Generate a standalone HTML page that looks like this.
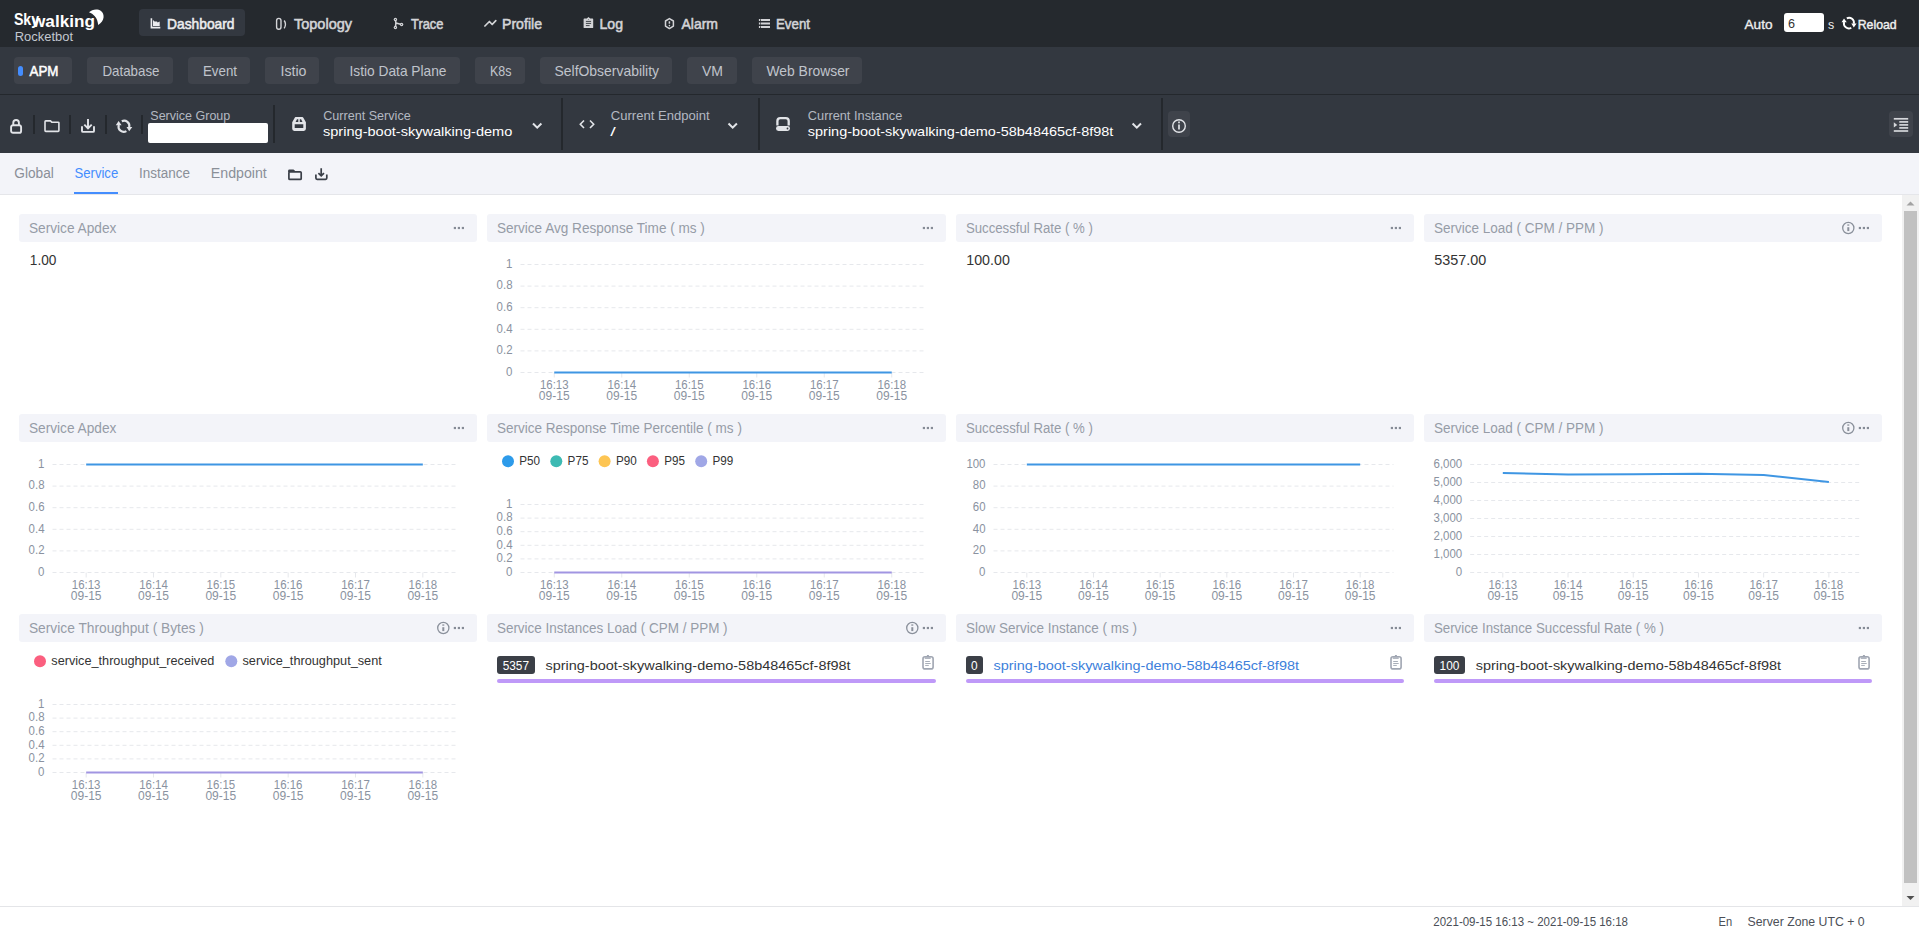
<!DOCTYPE html>
<html><head><meta charset="utf-8"><title>SkyWalking Rocketbot</title>
<style>
html,body{margin:0;padding:0;width:1919px;height:934px;overflow:hidden;background:#fff;font-family:"Liberation Sans",sans-serif;}
#root{position:relative;width:1919px;height:934px;overflow:hidden;}
svg text{font-family:"Liberation Sans",sans-serif;}
</style></head><body><div id="root">
<div style="position:absolute;left:0px;top:0px;width:1919px;height:47px;background:#25292e;border-radius:0px;"></div>
<div style="position:absolute;left:139px;top:9px;width:106px;height:27px;background:#333840;border-radius:4px;"></div>
<div style="position:absolute;left:1784px;top:13px;width:40px;height:19px;background:#ffffff;border-radius:3px;"></div>
<div style="position:absolute;left:0px;top:47px;width:1919px;height:47px;background:#333840;border-radius:0px;"></div>
<div style="position:absolute;left:0px;top:94px;width:1919px;height:1px;background:#24282d;border-radius:0px;"></div>
<div style="position:absolute;left:14px;top:57px;width:58px;height:27px;background:#3f434b;border-radius:4px;"></div>
<div style="position:absolute;left:87px;top:57px;width:86px;height:27px;background:#3f434b;border-radius:4px;"></div>
<div style="position:absolute;left:188px;top:57px;width:62px;height:27px;background:#3f434b;border-radius:4px;"></div>
<div style="position:absolute;left:265px;top:57px;width:54px;height:27px;background:#3f434b;border-radius:4px;"></div>
<div style="position:absolute;left:334px;top:57px;width:126px;height:27px;background:#3f434b;border-radius:4px;"></div>
<div style="position:absolute;left:475px;top:57px;width:50px;height:27px;background:#3f434b;border-radius:4px;"></div>
<div style="position:absolute;left:540px;top:57px;width:132px;height:27px;background:#3f434b;border-radius:4px;"></div>
<div style="position:absolute;left:687px;top:57px;width:50px;height:27px;background:#3f434b;border-radius:4px;"></div>
<div style="position:absolute;left:752px;top:57px;width:110px;height:27px;background:#3f434b;border-radius:4px;"></div>
<div style="position:absolute;left:18px;top:66px;width:5px;height:10px;background:#448dfe;border-radius:2.5px;"></div>
<div style="position:absolute;left:0px;top:95px;width:1919px;height:58px;background:#333840;border-radius:0px;"></div>
<div style="position:absolute;left:33.2px;top:115px;width:1.8px;height:19px;background:#24282d;border-radius:0px;"></div>
<div style="position:absolute;left:69.2px;top:115px;width:1.8px;height:19px;background:#24282d;border-radius:0px;"></div>
<div style="position:absolute;left:105.1px;top:115px;width:1.8px;height:19px;background:#24282d;border-radius:0px;"></div>
<div style="position:absolute;left:141.2px;top:115px;width:1.8px;height:19px;background:#24282d;border-radius:0px;"></div>
<div style="position:absolute;left:148px;top:123px;width:120px;height:20px;background:#ffffff;border-radius:2px;"></div>
<div style="position:absolute;left:273px;top:105px;width:2px;height:38px;background:#24282d;border-radius:0px;"></div>
<div style="position:absolute;left:561px;top:98px;width:2px;height:52px;background:#24282d;border-radius:0px;"></div>
<div style="position:absolute;left:757.5px;top:98px;width:2px;height:52px;background:#24282d;border-radius:0px;"></div>
<div style="position:absolute;left:775.9px;top:126.1px;width:14px;height:4.9px;background:#e2e4e8;border-radius:2.45px;"></div>
<div style="position:absolute;left:1161px;top:98px;width:2px;height:52px;background:#24282d;border-radius:0px;"></div>
<div style="position:absolute;left:1168px;top:111px;width:21.5px;height:25.5px;background:#3f434b;border-radius:4px;"></div>
<div style="position:absolute;left:1889px;top:111px;width:24px;height:26px;background:#3f434b;border-radius:4px;"></div>
<div style="position:absolute;left:0px;top:153px;width:1919px;height:41px;background:#f3f4f9;border-radius:0px;"></div>
<div style="position:absolute;left:0px;top:194px;width:1919px;height:1px;background:#e5e6ea;border-radius:0px;"></div>
<div style="position:absolute;left:74px;top:192px;width:44px;height:2px;background:#448dfe;border-radius:0px;"></div>
<div style="position:absolute;left:0px;top:195px;width:1902px;height:711px;background:#ffffff;border-radius:0px;"></div>
<div style="position:absolute;left:1902px;top:195px;width:17px;height:711px;background:#f1f1f1;border-radius:0px;"></div>
<div style="position:absolute;left:1904px;top:211px;width:13px;height:672px;background:#c1c1c1;border-radius:0px;"></div>
<div style="position:absolute;left:0px;top:906px;width:1919px;height:1px;background:#e4e5e8;border-radius:0px;"></div>
<div style="position:absolute;left:0px;top:907px;width:1919px;height:27px;background:#ffffff;border-radius:0px;"></div>
<div style="position:absolute;left:19px;top:214px;width:458px;height:28px;background:#f3f4f9;border-radius:3px;"></div>
<div style="position:absolute;left:487px;top:214px;width:459px;height:28px;background:#f3f4f9;border-radius:3px;"></div>
<div style="position:absolute;left:956px;top:214px;width:458px;height:28px;background:#f3f4f9;border-radius:3px;"></div>
<div style="position:absolute;left:1424px;top:214px;width:458px;height:28px;background:#f3f4f9;border-radius:3px;"></div>
<div style="position:absolute;left:19px;top:414px;width:458px;height:28px;background:#f3f4f9;border-radius:3px;"></div>
<div style="position:absolute;left:487px;top:414px;width:459px;height:28px;background:#f3f4f9;border-radius:3px;"></div>
<div style="position:absolute;left:956px;top:414px;width:458px;height:28px;background:#f3f4f9;border-radius:3px;"></div>
<div style="position:absolute;left:1424px;top:414px;width:458px;height:28px;background:#f3f4f9;border-radius:3px;"></div>
<div style="position:absolute;left:19px;top:614px;width:458px;height:28px;background:#f3f4f9;border-radius:3px;"></div>
<div style="position:absolute;left:487px;top:614px;width:459px;height:28px;background:#f3f4f9;border-radius:3px;"></div>
<div style="position:absolute;left:497px;top:656px;width:37.7px;height:18px;background:#3b3f47;border-radius:3px;"></div>
<div style="position:absolute;left:497px;top:679px;width:438.5px;height:4px;background:#bf99f8;border-radius:2px;"></div>
<div style="position:absolute;left:956px;top:614px;width:458px;height:28px;background:#f3f4f9;border-radius:3px;"></div>
<div style="position:absolute;left:966px;top:656px;width:16.7px;height:18px;background:#3b3f47;border-radius:3px;"></div>
<div style="position:absolute;left:966px;top:679px;width:437.5px;height:4px;background:#bf99f8;border-radius:2px;"></div>
<div style="position:absolute;left:1424px;top:614px;width:458px;height:28px;background:#f3f4f9;border-radius:3px;"></div>
<div style="position:absolute;left:1434px;top:656px;width:31px;height:18px;background:#3b3f47;border-radius:3px;"></div>
<div style="position:absolute;left:1434px;top:679px;width:437.5px;height:4px;background:#bf99f8;border-radius:2px;"></div>
<svg style="position:absolute;left:0;top:0" width="1919" height="934" viewBox="0 0 1919 934">
<text x="13.9" y="25.1" font-size="16.7" fill="#ffffff" font-weight="bold" textLength="25.3" lengthAdjust="spacingAndGlyphs">Sky</text>
<text x="32" y="26.9" font-size="16.8" fill="#ffffff" font-weight="bold" textLength="63.0" lengthAdjust="spacingAndGlyphs">walking</text>
<text x="14.7" y="41" font-size="12.5" fill="#c3c8d0" textLength="58.3" lengthAdjust="spacingAndGlyphs">Rocketbot</text>
<path d="M89 12.3 C92 9.3 97.5 8.4 101 11 C104.8 14 105 20.8 98.2 25 C97.8 21.5 96.8 18.5 94.8 16.3 C93.2 14.5 91.2 13 89 12.3 Z" stroke="none" fill="#ffffff" stroke-width="1"/>
<text x="167" y="29.3" font-size="14.5" fill="#ececee" textLength="67.5" lengthAdjust="spacingAndGlyphs" stroke="#ececee" stroke-width="0.55">Dashboard</text>
<text x="294" y="29.3" font-size="14.5" fill="#d3d4d7" textLength="58.0" lengthAdjust="spacingAndGlyphs" stroke="#d3d4d7" stroke-width="0.55">Topology</text>
<text x="411" y="29.3" font-size="14.5" fill="#d3d4d7" textLength="32.5" lengthAdjust="spacingAndGlyphs" stroke="#d3d4d7" stroke-width="0.55">Trace</text>
<text x="502" y="29.3" font-size="14.5" fill="#d3d4d7" textLength="40.0" lengthAdjust="spacingAndGlyphs" stroke="#d3d4d7" stroke-width="0.55">Profile</text>
<text x="599.5" y="29.3" font-size="14.5" fill="#d3d4d7" textLength="23.5" lengthAdjust="spacingAndGlyphs" stroke="#d3d4d7" stroke-width="0.55">Log</text>
<text x="681.5" y="29.3" font-size="14.5" fill="#d3d4d7" textLength="36.5" lengthAdjust="spacingAndGlyphs" stroke="#d3d4d7" stroke-width="0.55">Alarm</text>
<text x="776" y="29.3" font-size="14.5" fill="#d3d4d7" textLength="34.0" lengthAdjust="spacingAndGlyphs" stroke="#d3d4d7" stroke-width="0.55">Event</text>
<path d="M151.4 18.3 V27.6 H160.3" stroke="#ececee" fill="none" stroke-width="1.6"/>
<path d="M153 26 V20 L154.6 21.6 H157 L157.6 22.6 L159.7 21.5 V26 Z" stroke="none" fill="#ececee" stroke-width="1"/>
<path d="M278.8 18.4 a2.2 2.2 0 0 1 2.2 2.2 v6.4 a2.2 2.2 0 0 1 -2.2 2.2 a2.2 2.2 0 0 1 -2.2 -2.2 v-6.4 a2.2 2.2 0 0 1 2.2 -2.2 Z M284.2 20.5 q2.6 3.8 0 7.8" stroke="#d3d4d7" fill="none" stroke-width="1.4"/>
<path d="M395.4 19.5 L395.9 23 L395.4 27.5 M395.9 23 L401.6 24.5" stroke="#d3d4d7" fill="none" stroke-width="1.6"/>
<circle cx="395.4" cy="19.5" r="1.7" fill="#d3d4d7"/><circle cx="395.4" cy="19.5" r="0.5" fill="#25292e"/>
<circle cx="395.4" cy="27.5" r="1.7" fill="#d3d4d7"/><circle cx="395.4" cy="27.5" r="0.5" fill="#25292e"/>
<circle cx="401.6" cy="24.5" r="1.7" fill="#d3d4d7"/><circle cx="401.6" cy="24.5" r="0.5" fill="#25292e"/>
<path d="M484.9 26 L489.4 21.5 L492.2 24.5 L495.8 20.6" stroke="#d3d4d7" fill="none" stroke-width="1.7" stroke-linecap="round" stroke-linejoin="round"/>
<path d="M583.6 19.2 a0.7 0.7 0 0 1 0.7 -0.7 h2.5 l1.7 -1.5 l1.7 1.5 h2.3 a0.7 0.7 0 0 1 0.7 0.7 v8.2 a0.7 0.7 0 0 1 -0.7 0.7 h-8.2 a0.7 0.7 0 0 1 -0.7 -0.7 Z" stroke="none" fill="#d3d4d7" stroke-width="1"/>
<path d="M585.9 21.4 h5.2 M585.9 23.4 h5.2 M585.9 25.6 h3.7" stroke="#25292e" fill="none" stroke-width="0.85"/>
<circle cx="588.5" cy="19.4" r="0.45" fill="#25292e"/>
<path d="M669.4 18.6 L673.4 21 V26.2 L669.4 28.6 L665.5 26.2 V21 Z" stroke="#d3d4d7" fill="none" stroke-width="1.5" stroke-linejoin="round"/>
<path d="M669.4 21.3 V23.7" stroke="#d3d4d7" fill="none" stroke-width="1.5"/>
<circle cx="669.4" cy="25.6" r="0.8" fill="#d3d4d7"/>
<path d="M758.9 20 h1.3 M760.8 20 H770" stroke="#d3d4d7" fill="none" stroke-width="1.9"/>
<path d="M758.9 23.55 h1.3 M760.8 23.55 H770" stroke="#d3d4d7" fill="none" stroke-width="1.9"/>
<path d="M758.9 26.95 h1.3 M760.8 26.95 H770" stroke="#d3d4d7" fill="none" stroke-width="1.9"/>
<text x="1744.5" y="28.5" font-size="13.5" fill="#efefef" textLength="28.0" lengthAdjust="spacingAndGlyphs" stroke="#efefef" stroke-width="0.35">Auto</text>
<text x="1788" y="28" font-size="13.5" fill="#333" textLength="7.0" lengthAdjust="spacingAndGlyphs">6</text>
<text x="1828" y="28.5" font-size="13" fill="#efefef" textLength="6.2" lengthAdjust="spacingAndGlyphs">s</text>
<path d="M1846.8 18.3 A4.9 4.9 0 0 1 1853.8 23.8 M1851.3 27.7 A4.9 4.9 0 0 1 1844.1 22.1" stroke="#ffffff" fill="none" stroke-width="1.9"/>
<path d="M1851.3 23.6 L1856.6 23.6 L1853.8 27.5 Z M1841.5 22.3 L1846.8 22.3 L1844 18.4 Z" stroke="none" fill="#ffffff" stroke-width="1"/>
<text x="1857.7" y="28.5" font-size="13.5" fill="#efefef" textLength="39.0" lengthAdjust="spacingAndGlyphs" stroke="#efefef" stroke-width="0.45">Reload</text>
<text x="29.5" y="76.2" font-size="14.5" fill="#ffffff" textLength="29.0" lengthAdjust="spacingAndGlyphs" stroke="#ffffff" stroke-width="0.5">APM</text>
<text x="102.5" y="76.2" font-size="14.5" fill="#c0c4cb" textLength="57.0" lengthAdjust="spacingAndGlyphs">Database</text>
<text x="203" y="76.2" font-size="14.5" fill="#c0c4cb" textLength="34.0" lengthAdjust="spacingAndGlyphs">Event</text>
<text x="280.5" y="76.2" font-size="14.5" fill="#c0c4cb" textLength="26.0" lengthAdjust="spacingAndGlyphs">Istio</text>
<text x="349.5" y="76.2" font-size="14.5" fill="#c0c4cb" textLength="97.0" lengthAdjust="spacingAndGlyphs">Istio Data Plane</text>
<text x="490" y="76.2" font-size="14.5" fill="#c0c4cb" textLength="21.5" lengthAdjust="spacingAndGlyphs">K8s</text>
<text x="554.5" y="76.2" font-size="14.5" fill="#c0c4cb" textLength="104.5" lengthAdjust="spacingAndGlyphs">SelfObservability</text>
<text x="702" y="76.2" font-size="14.5" fill="#c0c4cb" textLength="21.0" lengthAdjust="spacingAndGlyphs">VM</text>
<text x="766.5" y="76.2" font-size="14.5" fill="#c0c4cb" textLength="83.0" lengthAdjust="spacingAndGlyphs">Web Browser</text>
<path d="M13.3 125.5 v-2.7 a2.8 2.8 0 0 1 5.6 0 v2.7" stroke="#e2e4e8" fill="none" stroke-width="1.9"/>
<path d="M13 125.2 h6.2 a1.9 1.9 0 0 1 1.9 1.9 v3.8 a1.9 1.9 0 0 1 -1.9 1.9 h-6.2 a1.9 1.9 0 0 1 -1.9 -1.9 v-3.8 a1.9 1.9 0 0 1 1.9 -1.9 Z" stroke="#e2e4e8" fill="none" stroke-width="1.9"/>
<path d="M45.8 120.9 h4.6 l1.4 1.3 h6.3 a0.8 0.8 0 0 1 0.8 0.8 v7.6 a0.8 0.8 0 0 1 -0.8 0.8 h-12.3 a0.8 0.8 0 0 1 -0.8 -0.8 v-8.9 a0.8 0.8 0 0 1 0.8 -0.8 Z" stroke="#e2e4e8" fill="none" stroke-width="1.6"/>
<path d="M88 119 v9 M84.3 124.6 L88 128.3 L91.7 124.6 M82 126.3 v4.6 a1 1 0 0 0 1 1 h10 a1 1 0 0 0 1 -1 v-4.6" stroke="#e2e4e8" fill="none" stroke-width="1.9"/>
<path d="M121.8 121.3 A5.2 5.2 0 0 1 129.2 127.2 M126.4 131.1 A5.2 5.2 0 0 1 118.8 125" stroke="#e2e4e8" fill="none" stroke-width="2.1"/>
<path d="M126.5 127 L132.3 127 L129.2 131.2 Z M115.8 125.2 L121.6 125.2 L118.6 121 Z" stroke="none" fill="#e2e4e8" stroke-width="1"/>
<text x="150.3" y="119.5" font-size="12.5" fill="#b3b9c2" textLength="80.0" lengthAdjust="spacingAndGlyphs">Service Group</text>
<path d="M295.6 117.1 H302.3 Q303 117.1 303.5 117.9 L305.9 122.2 V128.8 Q305.9 130.9 303.8 130.9 H294.3 Q292.2 130.9 292.2 128.8 V122.2 L294.6 117.9 Q295 117.1 295.6 117.1 Z M294.7 124.3 H303.3 V127.9 H294.7 Z M295.6 122 L297 119.2 H298.3 V122 Z M299.8 122 V119.2 H301.1 L302.5 122 Z" stroke="none" fill="#e2e4e8" stroke-width="1" fill-rule="evenodd"/>
<text x="323.2" y="120.2" font-size="12.5" fill="#b3b9c2" textLength="87.5" lengthAdjust="spacingAndGlyphs">Current Service</text>
<text x="323" y="136" font-size="13.5" fill="#ffffff" textLength="189.3" lengthAdjust="spacingAndGlyphs">spring-boot-skywalking-demo</text>
<path d="M533 123.5 L537.2 127.7 L541.4 123.5" stroke="#e2e4e8" fill="none" stroke-width="2"/>
<path d="M584 120.5 L580.3 124.2 L584 128 M590 120.5 L593.7 124.2 L590 128" stroke="#e2e4e8" fill="none" stroke-width="1.6"/>
<text x="610.8" y="120.2" font-size="12.5" fill="#b3b9c2" textLength="98.8" lengthAdjust="spacingAndGlyphs">Current Endpoint</text>
<text x="610.3" y="136" font-size="13.5" fill="#ffffff" textLength="5.5" lengthAdjust="spacingAndGlyphs">/</text>
<path d="M728.5 123.5 L732.7 127.7 L736.9 123.5" stroke="#e2e4e8" fill="none" stroke-width="2"/>
<path d="M777.4 125.6 V121 a2.9 2.9 0 0 1 2.9 -2.9 h5.5 a2.9 2.9 0 0 1 2.9 2.9 V125.6" stroke="#e2e4e8" fill="none" stroke-width="2.3"/>
<circle cx="787.5" cy="128.5" r="0.9" fill="#333840"/>
<text x="807.8" y="120.2" font-size="12.5" fill="#b3b9c2" textLength="94.5" lengthAdjust="spacingAndGlyphs">Current Instance</text>
<text x="807.8" y="136" font-size="13.5" fill="#ffffff" textLength="305.5" lengthAdjust="spacingAndGlyphs">spring-boot-skywalking-demo-58b48465cf-8f98t</text>
<path d="M1132.6 123.5 L1136.8 127.7 L1141 123.5" stroke="#e2e4e8" fill="none" stroke-width="2"/>
<circle cx="1179" cy="126" r="6.3" fill="none" stroke="#e2e4e8" stroke-width="1.4"/>
<path d="M1179 124.5 v5" stroke="#e2e4e8" fill="none" stroke-width="1.7"/>
<path d="M1179 121.6 v1.6" stroke="#e2e4e8" fill="none" stroke-width="1.7"/>
<path d="M1893.8 118.8 H1908.2" stroke="#d5d7db" fill="none" stroke-width="1.7"/>
<path d="M1899.3 121.9 H1908.2" stroke="#d5d7db" fill="none" stroke-width="1.7"/>
<path d="M1899.3 124.9 H1908.2" stroke="#d5d7db" fill="none" stroke-width="1.7"/>
<path d="M1899.3 127.9 H1908.2" stroke="#d5d7db" fill="none" stroke-width="1.7"/>
<path d="M1893.8 131 H1908.2" stroke="#d5d7db" fill="none" stroke-width="1.7"/>
<path d="M1893.8 122.2 L1897.3 124.9 L1893.8 127.6 Z" stroke="none" fill="#d5d7db" stroke-width="1"/>
<text x="14.3" y="178.3" font-size="14" fill="#8a8f98" textLength="39.5" lengthAdjust="spacingAndGlyphs">Global</text>
<text x="74.5" y="178.3" font-size="14" fill="#448dfe" textLength="43.7" lengthAdjust="spacingAndGlyphs">Service</text>
<text x="139" y="178.3" font-size="14" fill="#8a8f98" textLength="51.0" lengthAdjust="spacingAndGlyphs">Instance</text>
<text x="210.8" y="178.3" font-size="14" fill="#8a8f98" textLength="56.0" lengthAdjust="spacingAndGlyphs">Endpoint</text>
<path d="M290.2 171.8 h10 a1 1 0 0 1 1 1 v5.6 a1 1 0 0 1 -1 1 h-10.3 a1 1 0 0 1 -1 -1 v-5.6 a1 1 0 0 1 1 -1 Z" stroke="#3a3f48" fill="none" stroke-width="1.7"/>
<path d="M288.1 172 v-1.2 a1.3 1.3 0 0 1 1.3 -1.3 h4.1 l1.5 1.3 v1.2 Z" stroke="none" fill="#3a3f48" stroke-width="1"/>
<path d="M315.9 174.4 v3.7 a1.2 1.2 0 0 0 1.2 1.2 h8.5 a1.2 1.2 0 0 0 1.2 -1.2 v-3.7 M321.2 168.2 v7.6 M318.4 173.1 L321.2 175.9 L324 173.1" stroke="#3a3f48" fill="none" stroke-width="1.7"/>
<path d="M1906.5 205.5 L1910.5 201.5 L1914.5 205.5 Z" stroke="none" fill="#a3a3a3" stroke-width="1"/>
<path d="M1906.5 896 L1910.5 900 L1914.5 896 Z" stroke="none" fill="#505050" stroke-width="1"/>
<text x="1433.3" y="926.3" font-size="12" fill="#4b4f57" textLength="194.7" lengthAdjust="spacingAndGlyphs">2021-09-15 16:13 ~ 2021-09-15 16:18</text>
<text x="1718.6" y="926.3" font-size="12" fill="#4b4f57" textLength="13.6" lengthAdjust="spacingAndGlyphs">En</text>
<text x="1747.6" y="926.3" font-size="12" fill="#4b4f57" textLength="117.0" lengthAdjust="spacingAndGlyphs">Server Zone UTC + 0</text>
<text x="28.9" y="233" font-size="14" fill="#969ca7" textLength="87.5" lengthAdjust="spacingAndGlyphs">Service Apdex</text>
<rect x="453.8" y="226.9" width="2.2" height="2.2" fill="#858b96"/>
<rect x="457.8" y="226.9" width="2.2" height="2.2" fill="#858b96"/>
<rect x="461.8" y="226.9" width="2.2" height="2.2" fill="#858b96"/>
<text x="29.8" y="264.8" font-size="14.5" fill="#333333" textLength="26.6" lengthAdjust="spacingAndGlyphs">1.00</text>
<text x="496.9" y="233" font-size="14" fill="#969ca7" textLength="208.0" lengthAdjust="spacingAndGlyphs">Service Avg Response Time ( ms )</text>
<rect x="922.8" y="226.9" width="2.2" height="2.2" fill="#858b96"/>
<rect x="926.8" y="226.9" width="2.2" height="2.2" fill="#858b96"/>
<rect x="930.8" y="226.9" width="2.2" height="2.2" fill="#858b96"/>
<line x1="520.5" y1="264.50" x2="925.5" y2="264.50" stroke="#e6e8ec" stroke-width="1" stroke-dasharray="4 3"/>
<text x="512.5" y="267.8" font-size="12" fill="#8a92a0" text-anchor="end" textLength="6.4" lengthAdjust="spacingAndGlyphs">1</text>
<line x1="520.5" y1="286.10" x2="925.5" y2="286.10" stroke="#e6e8ec" stroke-width="1" stroke-dasharray="4 3"/>
<text x="512.5" y="289.40000000000003" font-size="12" fill="#8a92a0" text-anchor="end" textLength="15.9" lengthAdjust="spacingAndGlyphs">0.8</text>
<line x1="520.5" y1="307.70" x2="925.5" y2="307.70" stroke="#e6e8ec" stroke-width="1" stroke-dasharray="4 3"/>
<text x="512.5" y="311.0" font-size="12" fill="#8a92a0" text-anchor="end" textLength="15.9" lengthAdjust="spacingAndGlyphs">0.6</text>
<line x1="520.5" y1="329.30" x2="925.5" y2="329.30" stroke="#e6e8ec" stroke-width="1" stroke-dasharray="4 3"/>
<text x="512.5" y="332.6" font-size="12" fill="#8a92a0" text-anchor="end" textLength="15.9" lengthAdjust="spacingAndGlyphs">0.4</text>
<line x1="520.5" y1="350.90" x2="925.5" y2="350.90" stroke="#e6e8ec" stroke-width="1" stroke-dasharray="4 3"/>
<text x="512.5" y="354.2" font-size="12" fill="#8a92a0" text-anchor="end" textLength="15.9" lengthAdjust="spacingAndGlyphs">0.2</text>
<line x1="520.5" y1="372.50" x2="925.5" y2="372.50" stroke="#e6e8ec" stroke-width="1" stroke-dasharray="4 3"/>
<text x="512.5" y="375.8" font-size="12" fill="#8a92a0" text-anchor="end" textLength="6.4" lengthAdjust="spacingAndGlyphs">0</text>
<line x1="554.25" y1="372.5" x2="554.25" y2="377.5" stroke="#e6e8ec" stroke-width="1"/>
<text x="554.25" y="388.7" font-size="12" fill="#8a92a0" text-anchor="middle" textLength="28.6" lengthAdjust="spacingAndGlyphs">16:13</text>
<text x="554.25" y="400.0" font-size="12" fill="#8a92a0" text-anchor="middle" textLength="30.8" lengthAdjust="spacingAndGlyphs">09-15</text>
<line x1="621.75" y1="372.5" x2="621.75" y2="377.5" stroke="#e6e8ec" stroke-width="1"/>
<text x="621.75" y="388.7" font-size="12" fill="#8a92a0" text-anchor="middle" textLength="28.6" lengthAdjust="spacingAndGlyphs">16:14</text>
<text x="621.75" y="400.0" font-size="12" fill="#8a92a0" text-anchor="middle" textLength="30.8" lengthAdjust="spacingAndGlyphs">09-15</text>
<line x1="689.25" y1="372.5" x2="689.25" y2="377.5" stroke="#e6e8ec" stroke-width="1"/>
<text x="689.25" y="388.7" font-size="12" fill="#8a92a0" text-anchor="middle" textLength="28.6" lengthAdjust="spacingAndGlyphs">16:15</text>
<text x="689.25" y="400.0" font-size="12" fill="#8a92a0" text-anchor="middle" textLength="30.8" lengthAdjust="spacingAndGlyphs">09-15</text>
<line x1="756.75" y1="372.5" x2="756.75" y2="377.5" stroke="#e6e8ec" stroke-width="1"/>
<text x="756.75" y="388.7" font-size="12" fill="#8a92a0" text-anchor="middle" textLength="28.6" lengthAdjust="spacingAndGlyphs">16:16</text>
<text x="756.75" y="400.0" font-size="12" fill="#8a92a0" text-anchor="middle" textLength="30.8" lengthAdjust="spacingAndGlyphs">09-15</text>
<line x1="824.25" y1="372.5" x2="824.25" y2="377.5" stroke="#e6e8ec" stroke-width="1"/>
<text x="824.25" y="388.7" font-size="12" fill="#8a92a0" text-anchor="middle" textLength="28.6" lengthAdjust="spacingAndGlyphs">16:17</text>
<text x="824.25" y="400.0" font-size="12" fill="#8a92a0" text-anchor="middle" textLength="30.8" lengthAdjust="spacingAndGlyphs">09-15</text>
<line x1="891.75" y1="372.5" x2="891.75" y2="377.5" stroke="#e6e8ec" stroke-width="1"/>
<text x="891.75" y="388.7" font-size="12" fill="#8a92a0" text-anchor="middle" textLength="28.6" lengthAdjust="spacingAndGlyphs">16:18</text>
<text x="891.75" y="400.0" font-size="12" fill="#8a92a0" text-anchor="middle" textLength="30.8" lengthAdjust="spacingAndGlyphs">09-15</text>
<polyline points="554.25,372.5 621.75,372.5 689.25,372.5 756.75,372.5 824.25,372.5 891.75,372.5" fill="none" stroke="#3f96e3" stroke-width="2" stroke-linejoin="round"/>
<text x="965.9" y="233" font-size="14" fill="#969ca7" textLength="127.0" lengthAdjust="spacingAndGlyphs">Successful Rate ( % )</text>
<rect x="1390.8" y="226.9" width="2.2" height="2.2" fill="#858b96"/>
<rect x="1394.8" y="226.9" width="2.2" height="2.2" fill="#858b96"/>
<rect x="1398.8" y="226.9" width="2.2" height="2.2" fill="#858b96"/>
<text x="966.3" y="264.8" font-size="14.5" fill="#333333" textLength="43.5" lengthAdjust="spacingAndGlyphs">100.00</text>
<text x="1433.9" y="233" font-size="14" fill="#969ca7" textLength="169.5" lengthAdjust="spacingAndGlyphs">Service Load ( CPM / PPM )</text>
<rect x="1858.8" y="226.9" width="2.2" height="2.2" fill="#858b96"/>
<rect x="1862.8" y="226.9" width="2.2" height="2.2" fill="#858b96"/>
<rect x="1866.8" y="226.9" width="2.2" height="2.2" fill="#858b96"/>
<circle cx="1848.3" cy="228" r="5.6" fill="none" stroke="#8a909b" stroke-width="1.3"/>
<rect x="1847.3" y="227.2" width="2" height="3.9" fill="#8a909b"/>
<rect x="1847.3" y="224.4" width="2" height="1.3" fill="#8a909b"/>
<text x="1434.3" y="264.8" font-size="14.5" fill="#333333" textLength="52.0" lengthAdjust="spacingAndGlyphs">5357.00</text>
<text x="28.9" y="433" font-size="14" fill="#969ca7" textLength="87.5" lengthAdjust="spacingAndGlyphs">Service Apdex</text>
<rect x="453.8" y="426.9" width="2.2" height="2.2" fill="#858b96"/>
<rect x="457.8" y="426.9" width="2.2" height="2.2" fill="#858b96"/>
<rect x="461.8" y="426.9" width="2.2" height="2.2" fill="#858b96"/>
<line x1="52.5" y1="464.50" x2="456.5" y2="464.50" stroke="#e6e8ec" stroke-width="1" stroke-dasharray="4 3"/>
<text x="44.5" y="467.8" font-size="12" fill="#8a92a0" text-anchor="end" textLength="6.4" lengthAdjust="spacingAndGlyphs">1</text>
<line x1="52.5" y1="486.10" x2="456.5" y2="486.10" stroke="#e6e8ec" stroke-width="1" stroke-dasharray="4 3"/>
<text x="44.5" y="489.40000000000003" font-size="12" fill="#8a92a0" text-anchor="end" textLength="15.9" lengthAdjust="spacingAndGlyphs">0.8</text>
<line x1="52.5" y1="507.70" x2="456.5" y2="507.70" stroke="#e6e8ec" stroke-width="1" stroke-dasharray="4 3"/>
<text x="44.5" y="511.0" font-size="12" fill="#8a92a0" text-anchor="end" textLength="15.9" lengthAdjust="spacingAndGlyphs">0.6</text>
<line x1="52.5" y1="529.30" x2="456.5" y2="529.30" stroke="#e6e8ec" stroke-width="1" stroke-dasharray="4 3"/>
<text x="44.5" y="532.5999999999999" font-size="12" fill="#8a92a0" text-anchor="end" textLength="15.9" lengthAdjust="spacingAndGlyphs">0.4</text>
<line x1="52.5" y1="550.90" x2="456.5" y2="550.90" stroke="#e6e8ec" stroke-width="1" stroke-dasharray="4 3"/>
<text x="44.5" y="554.1999999999999" font-size="12" fill="#8a92a0" text-anchor="end" textLength="15.9" lengthAdjust="spacingAndGlyphs">0.2</text>
<line x1="52.5" y1="572.50" x2="456.5" y2="572.50" stroke="#e6e8ec" stroke-width="1" stroke-dasharray="4 3"/>
<text x="44.5" y="575.8" font-size="12" fill="#8a92a0" text-anchor="end" textLength="6.4" lengthAdjust="spacingAndGlyphs">0</text>
<line x1="86.17" y1="572.5" x2="86.17" y2="577.5" stroke="#e6e8ec" stroke-width="1"/>
<text x="86.16666666666666" y="588.7" font-size="12" fill="#8a92a0" text-anchor="middle" textLength="28.6" lengthAdjust="spacingAndGlyphs">16:13</text>
<text x="86.16666666666666" y="600.0" font-size="12" fill="#8a92a0" text-anchor="middle" textLength="30.8" lengthAdjust="spacingAndGlyphs">09-15</text>
<line x1="153.50" y1="572.5" x2="153.50" y2="577.5" stroke="#e6e8ec" stroke-width="1"/>
<text x="153.5" y="588.7" font-size="12" fill="#8a92a0" text-anchor="middle" textLength="28.6" lengthAdjust="spacingAndGlyphs">16:14</text>
<text x="153.5" y="600.0" font-size="12" fill="#8a92a0" text-anchor="middle" textLength="30.8" lengthAdjust="spacingAndGlyphs">09-15</text>
<line x1="220.83" y1="572.5" x2="220.83" y2="577.5" stroke="#e6e8ec" stroke-width="1"/>
<text x="220.83333333333331" y="588.7" font-size="12" fill="#8a92a0" text-anchor="middle" textLength="28.6" lengthAdjust="spacingAndGlyphs">16:15</text>
<text x="220.83333333333331" y="600.0" font-size="12" fill="#8a92a0" text-anchor="middle" textLength="30.8" lengthAdjust="spacingAndGlyphs">09-15</text>
<line x1="288.17" y1="572.5" x2="288.17" y2="577.5" stroke="#e6e8ec" stroke-width="1"/>
<text x="288.16666666666663" y="588.7" font-size="12" fill="#8a92a0" text-anchor="middle" textLength="28.6" lengthAdjust="spacingAndGlyphs">16:16</text>
<text x="288.16666666666663" y="600.0" font-size="12" fill="#8a92a0" text-anchor="middle" textLength="30.8" lengthAdjust="spacingAndGlyphs">09-15</text>
<line x1="355.50" y1="572.5" x2="355.50" y2="577.5" stroke="#e6e8ec" stroke-width="1"/>
<text x="355.5" y="588.7" font-size="12" fill="#8a92a0" text-anchor="middle" textLength="28.6" lengthAdjust="spacingAndGlyphs">16:17</text>
<text x="355.5" y="600.0" font-size="12" fill="#8a92a0" text-anchor="middle" textLength="30.8" lengthAdjust="spacingAndGlyphs">09-15</text>
<line x1="422.83" y1="572.5" x2="422.83" y2="577.5" stroke="#e6e8ec" stroke-width="1"/>
<text x="422.8333333333333" y="588.7" font-size="12" fill="#8a92a0" text-anchor="middle" textLength="28.6" lengthAdjust="spacingAndGlyphs">16:18</text>
<text x="422.8333333333333" y="600.0" font-size="12" fill="#8a92a0" text-anchor="middle" textLength="30.8" lengthAdjust="spacingAndGlyphs">09-15</text>
<polyline points="86.17,464.5 153.50,464.5 220.83,464.5 288.17,464.5 355.50,464.5 422.83,464.5" fill="none" stroke="#3f96e3" stroke-width="2" stroke-linejoin="round"/>
<text x="496.9" y="433" font-size="14" fill="#969ca7" textLength="245.0" lengthAdjust="spacingAndGlyphs">Service Response Time Percentile ( ms )</text>
<rect x="922.8" y="426.9" width="2.2" height="2.2" fill="#858b96"/>
<rect x="926.8" y="426.9" width="2.2" height="2.2" fill="#858b96"/>
<rect x="930.8" y="426.9" width="2.2" height="2.2" fill="#858b96"/>
<line x1="520.5" y1="504.50" x2="925.5" y2="504.50" stroke="#e6e8ec" stroke-width="1" stroke-dasharray="4 3"/>
<text x="512.5" y="507.8" font-size="12" fill="#8a92a0" text-anchor="end" textLength="6.4" lengthAdjust="spacingAndGlyphs">1</text>
<line x1="520.5" y1="518.10" x2="925.5" y2="518.10" stroke="#e6e8ec" stroke-width="1" stroke-dasharray="4 3"/>
<text x="512.5" y="521.4" font-size="12" fill="#8a92a0" text-anchor="end" textLength="15.9" lengthAdjust="spacingAndGlyphs">0.8</text>
<line x1="520.5" y1="531.70" x2="925.5" y2="531.70" stroke="#e6e8ec" stroke-width="1" stroke-dasharray="4 3"/>
<text x="512.5" y="535.0" font-size="12" fill="#8a92a0" text-anchor="end" textLength="15.9" lengthAdjust="spacingAndGlyphs">0.6</text>
<line x1="520.5" y1="545.30" x2="925.5" y2="545.30" stroke="#e6e8ec" stroke-width="1" stroke-dasharray="4 3"/>
<text x="512.5" y="548.5999999999999" font-size="12" fill="#8a92a0" text-anchor="end" textLength="15.9" lengthAdjust="spacingAndGlyphs">0.4</text>
<line x1="520.5" y1="558.90" x2="925.5" y2="558.90" stroke="#e6e8ec" stroke-width="1" stroke-dasharray="4 3"/>
<text x="512.5" y="562.1999999999999" font-size="12" fill="#8a92a0" text-anchor="end" textLength="15.9" lengthAdjust="spacingAndGlyphs">0.2</text>
<line x1="520.5" y1="572.50" x2="925.5" y2="572.50" stroke="#e6e8ec" stroke-width="1" stroke-dasharray="4 3"/>
<text x="512.5" y="575.8" font-size="12" fill="#8a92a0" text-anchor="end" textLength="6.4" lengthAdjust="spacingAndGlyphs">0</text>
<line x1="554.25" y1="572.5" x2="554.25" y2="577.5" stroke="#e6e8ec" stroke-width="1"/>
<text x="554.25" y="588.7" font-size="12" fill="#8a92a0" text-anchor="middle" textLength="28.6" lengthAdjust="spacingAndGlyphs">16:13</text>
<text x="554.25" y="600.0" font-size="12" fill="#8a92a0" text-anchor="middle" textLength="30.8" lengthAdjust="spacingAndGlyphs">09-15</text>
<line x1="621.75" y1="572.5" x2="621.75" y2="577.5" stroke="#e6e8ec" stroke-width="1"/>
<text x="621.75" y="588.7" font-size="12" fill="#8a92a0" text-anchor="middle" textLength="28.6" lengthAdjust="spacingAndGlyphs">16:14</text>
<text x="621.75" y="600.0" font-size="12" fill="#8a92a0" text-anchor="middle" textLength="30.8" lengthAdjust="spacingAndGlyphs">09-15</text>
<line x1="689.25" y1="572.5" x2="689.25" y2="577.5" stroke="#e6e8ec" stroke-width="1"/>
<text x="689.25" y="588.7" font-size="12" fill="#8a92a0" text-anchor="middle" textLength="28.6" lengthAdjust="spacingAndGlyphs">16:15</text>
<text x="689.25" y="600.0" font-size="12" fill="#8a92a0" text-anchor="middle" textLength="30.8" lengthAdjust="spacingAndGlyphs">09-15</text>
<line x1="756.75" y1="572.5" x2="756.75" y2="577.5" stroke="#e6e8ec" stroke-width="1"/>
<text x="756.75" y="588.7" font-size="12" fill="#8a92a0" text-anchor="middle" textLength="28.6" lengthAdjust="spacingAndGlyphs">16:16</text>
<text x="756.75" y="600.0" font-size="12" fill="#8a92a0" text-anchor="middle" textLength="30.8" lengthAdjust="spacingAndGlyphs">09-15</text>
<line x1="824.25" y1="572.5" x2="824.25" y2="577.5" stroke="#e6e8ec" stroke-width="1"/>
<text x="824.25" y="588.7" font-size="12" fill="#8a92a0" text-anchor="middle" textLength="28.6" lengthAdjust="spacingAndGlyphs">16:17</text>
<text x="824.25" y="600.0" font-size="12" fill="#8a92a0" text-anchor="middle" textLength="30.8" lengthAdjust="spacingAndGlyphs">09-15</text>
<line x1="891.75" y1="572.5" x2="891.75" y2="577.5" stroke="#e6e8ec" stroke-width="1"/>
<text x="891.75" y="588.7" font-size="12" fill="#8a92a0" text-anchor="middle" textLength="28.6" lengthAdjust="spacingAndGlyphs">16:18</text>
<text x="891.75" y="600.0" font-size="12" fill="#8a92a0" text-anchor="middle" textLength="30.8" lengthAdjust="spacingAndGlyphs">09-15</text>
<polyline points="554.25,572.5 621.75,572.5 689.25,572.5 756.75,572.5 824.25,572.5 891.75,572.5" fill="none" stroke="#a195e2" stroke-width="2" stroke-linejoin="round"/>
<text x="965.9" y="433" font-size="14" fill="#969ca7" textLength="127.0" lengthAdjust="spacingAndGlyphs">Successful Rate ( % )</text>
<rect x="1390.8" y="426.9" width="2.2" height="2.2" fill="#858b96"/>
<rect x="1394.8" y="426.9" width="2.2" height="2.2" fill="#858b96"/>
<rect x="1398.8" y="426.9" width="2.2" height="2.2" fill="#858b96"/>
<line x1="993.5" y1="464.50" x2="1393.5" y2="464.50" stroke="#e6e8ec" stroke-width="1" stroke-dasharray="4 3"/>
<text x="985.5" y="467.8" font-size="12" fill="#8a92a0" text-anchor="end" textLength="19.1" lengthAdjust="spacingAndGlyphs">100</text>
<line x1="993.5" y1="486.10" x2="1393.5" y2="486.10" stroke="#e6e8ec" stroke-width="1" stroke-dasharray="4 3"/>
<text x="985.5" y="489.40000000000003" font-size="12" fill="#8a92a0" text-anchor="end" textLength="12.7" lengthAdjust="spacingAndGlyphs">80</text>
<line x1="993.5" y1="507.70" x2="1393.5" y2="507.70" stroke="#e6e8ec" stroke-width="1" stroke-dasharray="4 3"/>
<text x="985.5" y="511.0" font-size="12" fill="#8a92a0" text-anchor="end" textLength="12.7" lengthAdjust="spacingAndGlyphs">60</text>
<line x1="993.5" y1="529.30" x2="1393.5" y2="529.30" stroke="#e6e8ec" stroke-width="1" stroke-dasharray="4 3"/>
<text x="985.5" y="532.5999999999999" font-size="12" fill="#8a92a0" text-anchor="end" textLength="12.7" lengthAdjust="spacingAndGlyphs">40</text>
<line x1="993.5" y1="550.90" x2="1393.5" y2="550.90" stroke="#e6e8ec" stroke-width="1" stroke-dasharray="4 3"/>
<text x="985.5" y="554.1999999999999" font-size="12" fill="#8a92a0" text-anchor="end" textLength="12.7" lengthAdjust="spacingAndGlyphs">20</text>
<line x1="993.5" y1="572.50" x2="1393.5" y2="572.50" stroke="#e6e8ec" stroke-width="1" stroke-dasharray="4 3"/>
<text x="985.5" y="575.8" font-size="12" fill="#8a92a0" text-anchor="end" textLength="6.4" lengthAdjust="spacingAndGlyphs">0</text>
<line x1="1026.83" y1="572.5" x2="1026.83" y2="577.5" stroke="#e6e8ec" stroke-width="1"/>
<text x="1026.8333333333333" y="588.7" font-size="12" fill="#8a92a0" text-anchor="middle" textLength="28.6" lengthAdjust="spacingAndGlyphs">16:13</text>
<text x="1026.8333333333333" y="600.0" font-size="12" fill="#8a92a0" text-anchor="middle" textLength="30.8" lengthAdjust="spacingAndGlyphs">09-15</text>
<line x1="1093.50" y1="572.5" x2="1093.50" y2="577.5" stroke="#e6e8ec" stroke-width="1"/>
<text x="1093.5" y="588.7" font-size="12" fill="#8a92a0" text-anchor="middle" textLength="28.6" lengthAdjust="spacingAndGlyphs">16:14</text>
<text x="1093.5" y="600.0" font-size="12" fill="#8a92a0" text-anchor="middle" textLength="30.8" lengthAdjust="spacingAndGlyphs">09-15</text>
<line x1="1160.17" y1="572.5" x2="1160.17" y2="577.5" stroke="#e6e8ec" stroke-width="1"/>
<text x="1160.1666666666667" y="588.7" font-size="12" fill="#8a92a0" text-anchor="middle" textLength="28.6" lengthAdjust="spacingAndGlyphs">16:15</text>
<text x="1160.1666666666667" y="600.0" font-size="12" fill="#8a92a0" text-anchor="middle" textLength="30.8" lengthAdjust="spacingAndGlyphs">09-15</text>
<line x1="1226.83" y1="572.5" x2="1226.83" y2="577.5" stroke="#e6e8ec" stroke-width="1"/>
<text x="1226.8333333333333" y="588.7" font-size="12" fill="#8a92a0" text-anchor="middle" textLength="28.6" lengthAdjust="spacingAndGlyphs">16:16</text>
<text x="1226.8333333333333" y="600.0" font-size="12" fill="#8a92a0" text-anchor="middle" textLength="30.8" lengthAdjust="spacingAndGlyphs">09-15</text>
<line x1="1293.50" y1="572.5" x2="1293.50" y2="577.5" stroke="#e6e8ec" stroke-width="1"/>
<text x="1293.5" y="588.7" font-size="12" fill="#8a92a0" text-anchor="middle" textLength="28.6" lengthAdjust="spacingAndGlyphs">16:17</text>
<text x="1293.5" y="600.0" font-size="12" fill="#8a92a0" text-anchor="middle" textLength="30.8" lengthAdjust="spacingAndGlyphs">09-15</text>
<line x1="1360.17" y1="572.5" x2="1360.17" y2="577.5" stroke="#e6e8ec" stroke-width="1"/>
<text x="1360.1666666666667" y="588.7" font-size="12" fill="#8a92a0" text-anchor="middle" textLength="28.6" lengthAdjust="spacingAndGlyphs">16:18</text>
<text x="1360.1666666666667" y="600.0" font-size="12" fill="#8a92a0" text-anchor="middle" textLength="30.8" lengthAdjust="spacingAndGlyphs">09-15</text>
<polyline points="1026.83,464.5 1093.50,464.5 1160.17,464.5 1226.83,464.5 1293.50,464.5 1360.17,464.5" fill="none" stroke="#3f96e3" stroke-width="2" stroke-linejoin="round"/>
<text x="1433.9" y="433" font-size="14" fill="#969ca7" textLength="169.5" lengthAdjust="spacingAndGlyphs">Service Load ( CPM / PPM )</text>
<rect x="1858.8" y="426.9" width="2.2" height="2.2" fill="#858b96"/>
<rect x="1862.8" y="426.9" width="2.2" height="2.2" fill="#858b96"/>
<rect x="1866.8" y="426.9" width="2.2" height="2.2" fill="#858b96"/>
<circle cx="1848.3" cy="428" r="5.6" fill="none" stroke="#8a909b" stroke-width="1.3"/>
<rect x="1847.3" y="427.2" width="2" height="3.9" fill="#8a909b"/>
<rect x="1847.3" y="424.4" width="2" height="1.3" fill="#8a909b"/>
<line x1="1470.2" y1="464.50" x2="1861.5" y2="464.50" stroke="#e6e8ec" stroke-width="1" stroke-dasharray="4 3"/>
<text x="1462.2" y="467.8" font-size="12" fill="#8a92a0" text-anchor="end" textLength="28.7" lengthAdjust="spacingAndGlyphs">6,000</text>
<line x1="1470.2" y1="482.50" x2="1861.5" y2="482.50" stroke="#e6e8ec" stroke-width="1" stroke-dasharray="4 3"/>
<text x="1462.2" y="485.8" font-size="12" fill="#8a92a0" text-anchor="end" textLength="28.7" lengthAdjust="spacingAndGlyphs">5,000</text>
<line x1="1470.2" y1="500.50" x2="1861.5" y2="500.50" stroke="#e6e8ec" stroke-width="1" stroke-dasharray="4 3"/>
<text x="1462.2" y="503.8" font-size="12" fill="#8a92a0" text-anchor="end" textLength="28.7" lengthAdjust="spacingAndGlyphs">4,000</text>
<line x1="1470.2" y1="518.50" x2="1861.5" y2="518.50" stroke="#e6e8ec" stroke-width="1" stroke-dasharray="4 3"/>
<text x="1462.2" y="521.8" font-size="12" fill="#8a92a0" text-anchor="end" textLength="28.7" lengthAdjust="spacingAndGlyphs">3,000</text>
<line x1="1470.2" y1="536.50" x2="1861.5" y2="536.50" stroke="#e6e8ec" stroke-width="1" stroke-dasharray="4 3"/>
<text x="1462.2" y="539.8" font-size="12" fill="#8a92a0" text-anchor="end" textLength="28.7" lengthAdjust="spacingAndGlyphs">2,000</text>
<line x1="1470.2" y1="554.50" x2="1861.5" y2="554.50" stroke="#e6e8ec" stroke-width="1" stroke-dasharray="4 3"/>
<text x="1462.2" y="557.8" font-size="12" fill="#8a92a0" text-anchor="end" textLength="28.7" lengthAdjust="spacingAndGlyphs">1,000</text>
<line x1="1470.2" y1="572.50" x2="1861.5" y2="572.50" stroke="#e6e8ec" stroke-width="1" stroke-dasharray="4 3"/>
<text x="1462.2" y="575.8" font-size="12" fill="#8a92a0" text-anchor="end" textLength="6.4" lengthAdjust="spacingAndGlyphs">0</text>
<line x1="1502.81" y1="572.5" x2="1502.81" y2="577.5" stroke="#e6e8ec" stroke-width="1"/>
<text x="1502.8083333333334" y="588.7" font-size="12" fill="#8a92a0" text-anchor="middle" textLength="28.6" lengthAdjust="spacingAndGlyphs">16:13</text>
<text x="1502.8083333333334" y="600.0" font-size="12" fill="#8a92a0" text-anchor="middle" textLength="30.8" lengthAdjust="spacingAndGlyphs">09-15</text>
<line x1="1568.03" y1="572.5" x2="1568.03" y2="577.5" stroke="#e6e8ec" stroke-width="1"/>
<text x="1568.025" y="588.7" font-size="12" fill="#8a92a0" text-anchor="middle" textLength="28.6" lengthAdjust="spacingAndGlyphs">16:14</text>
<text x="1568.025" y="600.0" font-size="12" fill="#8a92a0" text-anchor="middle" textLength="30.8" lengthAdjust="spacingAndGlyphs">09-15</text>
<line x1="1633.24" y1="572.5" x2="1633.24" y2="577.5" stroke="#e6e8ec" stroke-width="1"/>
<text x="1633.2416666666668" y="588.7" font-size="12" fill="#8a92a0" text-anchor="middle" textLength="28.6" lengthAdjust="spacingAndGlyphs">16:15</text>
<text x="1633.2416666666668" y="600.0" font-size="12" fill="#8a92a0" text-anchor="middle" textLength="30.8" lengthAdjust="spacingAndGlyphs">09-15</text>
<line x1="1698.46" y1="572.5" x2="1698.46" y2="577.5" stroke="#e6e8ec" stroke-width="1"/>
<text x="1698.4583333333333" y="588.7" font-size="12" fill="#8a92a0" text-anchor="middle" textLength="28.6" lengthAdjust="spacingAndGlyphs">16:16</text>
<text x="1698.4583333333333" y="600.0" font-size="12" fill="#8a92a0" text-anchor="middle" textLength="30.8" lengthAdjust="spacingAndGlyphs">09-15</text>
<line x1="1763.67" y1="572.5" x2="1763.67" y2="577.5" stroke="#e6e8ec" stroke-width="1"/>
<text x="1763.675" y="588.7" font-size="12" fill="#8a92a0" text-anchor="middle" textLength="28.6" lengthAdjust="spacingAndGlyphs">16:17</text>
<text x="1763.675" y="600.0" font-size="12" fill="#8a92a0" text-anchor="middle" textLength="30.8" lengthAdjust="spacingAndGlyphs">09-15</text>
<line x1="1828.89" y1="572.5" x2="1828.89" y2="577.5" stroke="#e6e8ec" stroke-width="1"/>
<text x="1828.8916666666667" y="588.7" font-size="12" fill="#8a92a0" text-anchor="middle" textLength="28.6" lengthAdjust="spacingAndGlyphs">16:18</text>
<text x="1828.8916666666667" y="600.0" font-size="12" fill="#8a92a0" text-anchor="middle" textLength="30.8" lengthAdjust="spacingAndGlyphs">09-15</text>
<polyline points="1502.81,473 1568.03,474.5 1633.24,474.3 1698.46,473.8 1763.67,475 1828.89,482" fill="none" stroke="#3f96e3" stroke-width="2" stroke-linejoin="round"/>
<circle cx="508.0" cy="461.3" r="6" fill="#2d9bea"/>
<text x="519.3" y="465" font-size="12.5" fill="#333333" textLength="20.8" lengthAdjust="spacingAndGlyphs">P50</text>
<circle cx="556.3" cy="461.3" r="6" fill="#3dbab3"/>
<text x="567.5999999999999" y="465" font-size="12.5" fill="#333333" textLength="20.8" lengthAdjust="spacingAndGlyphs">P75</text>
<circle cx="604.6" cy="461.3" r="6" fill="#fdc553"/>
<text x="615.9" y="465" font-size="12.5" fill="#333333" textLength="20.8" lengthAdjust="spacingAndGlyphs">P90</text>
<circle cx="652.9" cy="461.3" r="6" fill="#fb5f7f"/>
<text x="664.1999999999999" y="465" font-size="12.5" fill="#333333" textLength="20.8" lengthAdjust="spacingAndGlyphs">P95</text>
<circle cx="701.2" cy="461.3" r="6" fill="#a0a7e6"/>
<text x="712.5" y="465" font-size="12.5" fill="#333333" textLength="20.8" lengthAdjust="spacingAndGlyphs">P99</text>
<text x="28.9" y="633" font-size="14" fill="#969ca7" textLength="175.0" lengthAdjust="spacingAndGlyphs">Service Throughput ( Bytes )</text>
<rect x="453.8" y="626.9" width="2.2" height="2.2" fill="#858b96"/>
<rect x="457.8" y="626.9" width="2.2" height="2.2" fill="#858b96"/>
<rect x="461.8" y="626.9" width="2.2" height="2.2" fill="#858b96"/>
<circle cx="443.3" cy="628" r="5.6" fill="none" stroke="#8a909b" stroke-width="1.3"/>
<rect x="442.3" y="627.2" width="2" height="3.9" fill="#8a909b"/>
<rect x="442.3" y="624.4" width="2" height="1.3" fill="#8a909b"/>
<line x1="52.5" y1="704.50" x2="456.5" y2="704.50" stroke="#e6e8ec" stroke-width="1" stroke-dasharray="4 3"/>
<text x="44.5" y="707.8" font-size="12" fill="#8a92a0" text-anchor="end" textLength="6.4" lengthAdjust="spacingAndGlyphs">1</text>
<line x1="52.5" y1="718.10" x2="456.5" y2="718.10" stroke="#e6e8ec" stroke-width="1" stroke-dasharray="4 3"/>
<text x="44.5" y="721.4" font-size="12" fill="#8a92a0" text-anchor="end" textLength="15.9" lengthAdjust="spacingAndGlyphs">0.8</text>
<line x1="52.5" y1="731.70" x2="456.5" y2="731.70" stroke="#e6e8ec" stroke-width="1" stroke-dasharray="4 3"/>
<text x="44.5" y="735.0" font-size="12" fill="#8a92a0" text-anchor="end" textLength="15.9" lengthAdjust="spacingAndGlyphs">0.6</text>
<line x1="52.5" y1="745.30" x2="456.5" y2="745.30" stroke="#e6e8ec" stroke-width="1" stroke-dasharray="4 3"/>
<text x="44.5" y="748.5999999999999" font-size="12" fill="#8a92a0" text-anchor="end" textLength="15.9" lengthAdjust="spacingAndGlyphs">0.4</text>
<line x1="52.5" y1="758.90" x2="456.5" y2="758.90" stroke="#e6e8ec" stroke-width="1" stroke-dasharray="4 3"/>
<text x="44.5" y="762.1999999999999" font-size="12" fill="#8a92a0" text-anchor="end" textLength="15.9" lengthAdjust="spacingAndGlyphs">0.2</text>
<line x1="52.5" y1="772.50" x2="456.5" y2="772.50" stroke="#e6e8ec" stroke-width="1" stroke-dasharray="4 3"/>
<text x="44.5" y="775.8" font-size="12" fill="#8a92a0" text-anchor="end" textLength="6.4" lengthAdjust="spacingAndGlyphs">0</text>
<line x1="86.17" y1="772.5" x2="86.17" y2="777.5" stroke="#e6e8ec" stroke-width="1"/>
<text x="86.16666666666666" y="788.7" font-size="12" fill="#8a92a0" text-anchor="middle" textLength="28.6" lengthAdjust="spacingAndGlyphs">16:13</text>
<text x="86.16666666666666" y="800.0" font-size="12" fill="#8a92a0" text-anchor="middle" textLength="30.8" lengthAdjust="spacingAndGlyphs">09-15</text>
<line x1="153.50" y1="772.5" x2="153.50" y2="777.5" stroke="#e6e8ec" stroke-width="1"/>
<text x="153.5" y="788.7" font-size="12" fill="#8a92a0" text-anchor="middle" textLength="28.6" lengthAdjust="spacingAndGlyphs">16:14</text>
<text x="153.5" y="800.0" font-size="12" fill="#8a92a0" text-anchor="middle" textLength="30.8" lengthAdjust="spacingAndGlyphs">09-15</text>
<line x1="220.83" y1="772.5" x2="220.83" y2="777.5" stroke="#e6e8ec" stroke-width="1"/>
<text x="220.83333333333331" y="788.7" font-size="12" fill="#8a92a0" text-anchor="middle" textLength="28.6" lengthAdjust="spacingAndGlyphs">16:15</text>
<text x="220.83333333333331" y="800.0" font-size="12" fill="#8a92a0" text-anchor="middle" textLength="30.8" lengthAdjust="spacingAndGlyphs">09-15</text>
<line x1="288.17" y1="772.5" x2="288.17" y2="777.5" stroke="#e6e8ec" stroke-width="1"/>
<text x="288.16666666666663" y="788.7" font-size="12" fill="#8a92a0" text-anchor="middle" textLength="28.6" lengthAdjust="spacingAndGlyphs">16:16</text>
<text x="288.16666666666663" y="800.0" font-size="12" fill="#8a92a0" text-anchor="middle" textLength="30.8" lengthAdjust="spacingAndGlyphs">09-15</text>
<line x1="355.50" y1="772.5" x2="355.50" y2="777.5" stroke="#e6e8ec" stroke-width="1"/>
<text x="355.5" y="788.7" font-size="12" fill="#8a92a0" text-anchor="middle" textLength="28.6" lengthAdjust="spacingAndGlyphs">16:17</text>
<text x="355.5" y="800.0" font-size="12" fill="#8a92a0" text-anchor="middle" textLength="30.8" lengthAdjust="spacingAndGlyphs">09-15</text>
<line x1="422.83" y1="772.5" x2="422.83" y2="777.5" stroke="#e6e8ec" stroke-width="1"/>
<text x="422.8333333333333" y="788.7" font-size="12" fill="#8a92a0" text-anchor="middle" textLength="28.6" lengthAdjust="spacingAndGlyphs">16:18</text>
<text x="422.8333333333333" y="800.0" font-size="12" fill="#8a92a0" text-anchor="middle" textLength="30.8" lengthAdjust="spacingAndGlyphs">09-15</text>
<polyline points="86.17,772.5 153.50,772.5 220.83,772.5 288.17,772.5 355.50,772.5 422.83,772.5" fill="none" stroke="#a195e2" stroke-width="2" stroke-linejoin="round"/>
<circle cx="40" cy="661.3" r="6" fill="#fb5f7f"/>
<text x="51.3" y="665" font-size="12.5" fill="#333333" textLength="163.0" lengthAdjust="spacingAndGlyphs">service_throughput_received</text>
<circle cx="231.3" cy="661.3" r="6" fill="#a0a7e6"/>
<text x="242.5" y="665" font-size="12.5" fill="#333333" textLength="139.3" lengthAdjust="spacingAndGlyphs">service_throughput_sent</text>
<text x="496.9" y="633" font-size="14" fill="#969ca7" textLength="230.7" lengthAdjust="spacingAndGlyphs">Service Instances Load ( CPM / PPM )</text>
<rect x="922.8" y="626.9" width="2.2" height="2.2" fill="#858b96"/>
<rect x="926.8" y="626.9" width="2.2" height="2.2" fill="#858b96"/>
<rect x="930.8" y="626.9" width="2.2" height="2.2" fill="#858b96"/>
<circle cx="912.3" cy="628" r="5.6" fill="none" stroke="#8a909b" stroke-width="1.3"/>
<rect x="911.3" y="627.2" width="2" height="3.9" fill="#8a909b"/>
<rect x="911.3" y="624.4" width="2" height="1.3" fill="#8a909b"/>
<text x="515.85" y="669.5" font-size="12.5" fill="#ffffff" text-anchor="middle" textLength="26.4" lengthAdjust="spacingAndGlyphs">5357</text>
<text x="545.5" y="670" font-size="13.5" fill="#333333" textLength="305.0" lengthAdjust="spacingAndGlyphs">spring-boot-skywalking-demo-58b48465cf-8f98t</text>
<rect x="923.0" y="656.8" width="10.1" height="12.1" rx="2" fill="none" stroke="#a0a6b2" stroke-width="1.6"/>
<rect x="924.7" y="657.4" width="6" height="1.4" fill="#a0a6b2"/>
<rect x="926.9" y="655" width="2" height="2" fill="#a0a6b2"/>
<rect x="925.2" y="661.05" width="4.7" height="0.9" fill="#a0a6b2"/>
<rect x="925.2" y="663.05" width="5.5" height="0.9" fill="#a0a6b2"/>
<rect x="925.2" y="664.9499999999999" width="3.6" height="0.9" fill="#a0a6b2"/>
<text x="965.9" y="633" font-size="14" fill="#969ca7" textLength="171.0" lengthAdjust="spacingAndGlyphs">Slow Service Instance ( ms )</text>
<rect x="1390.8" y="626.9" width="2.2" height="2.2" fill="#858b96"/>
<rect x="1394.8" y="626.9" width="2.2" height="2.2" fill="#858b96"/>
<rect x="1398.8" y="626.9" width="2.2" height="2.2" fill="#858b96"/>
<text x="974.35" y="669.5" font-size="12.5" fill="#ffffff" text-anchor="middle" textLength="6.6" lengthAdjust="spacingAndGlyphs">0</text>
<text x="993.5" y="670" font-size="13.5" fill="#3d7fdb" textLength="305.5" lengthAdjust="spacingAndGlyphs">spring-boot-skywalking-demo-58b48465cf-8f98t</text>
<rect x="1391.0" y="656.8" width="10.1" height="12.1" rx="2" fill="none" stroke="#a0a6b2" stroke-width="1.6"/>
<rect x="1392.7" y="657.4" width="6" height="1.4" fill="#a0a6b2"/>
<rect x="1394.9" y="655" width="2" height="2" fill="#a0a6b2"/>
<rect x="1393.2" y="661.05" width="4.7" height="0.9" fill="#a0a6b2"/>
<rect x="1393.2" y="663.05" width="5.5" height="0.9" fill="#a0a6b2"/>
<rect x="1393.2" y="664.9499999999999" width="3.6" height="0.9" fill="#a0a6b2"/>
<text x="1433.9" y="633" font-size="14" fill="#969ca7" textLength="230.0" lengthAdjust="spacingAndGlyphs">Service Instance Successful Rate ( % )</text>
<rect x="1858.8" y="626.9" width="2.2" height="2.2" fill="#858b96"/>
<rect x="1862.8" y="626.9" width="2.2" height="2.2" fill="#858b96"/>
<rect x="1866.8" y="626.9" width="2.2" height="2.2" fill="#858b96"/>
<text x="1449.5" y="669.5" font-size="12.5" fill="#ffffff" text-anchor="middle" textLength="19.8" lengthAdjust="spacingAndGlyphs">100</text>
<text x="1475.8" y="670" font-size="13.5" fill="#333333" textLength="305.2" lengthAdjust="spacingAndGlyphs">spring-boot-skywalking-demo-58b48465cf-8f98t</text>
<rect x="1859.0" y="656.8" width="10.1" height="12.1" rx="2" fill="none" stroke="#a0a6b2" stroke-width="1.6"/>
<rect x="1860.7" y="657.4" width="6" height="1.4" fill="#a0a6b2"/>
<rect x="1862.9" y="655" width="2" height="2" fill="#a0a6b2"/>
<rect x="1861.2" y="661.05" width="4.7" height="0.9" fill="#a0a6b2"/>
<rect x="1861.2" y="663.05" width="5.5" height="0.9" fill="#a0a6b2"/>
<rect x="1861.2" y="664.9499999999999" width="3.6" height="0.9" fill="#a0a6b2"/>
</svg>
</div></body></html>
